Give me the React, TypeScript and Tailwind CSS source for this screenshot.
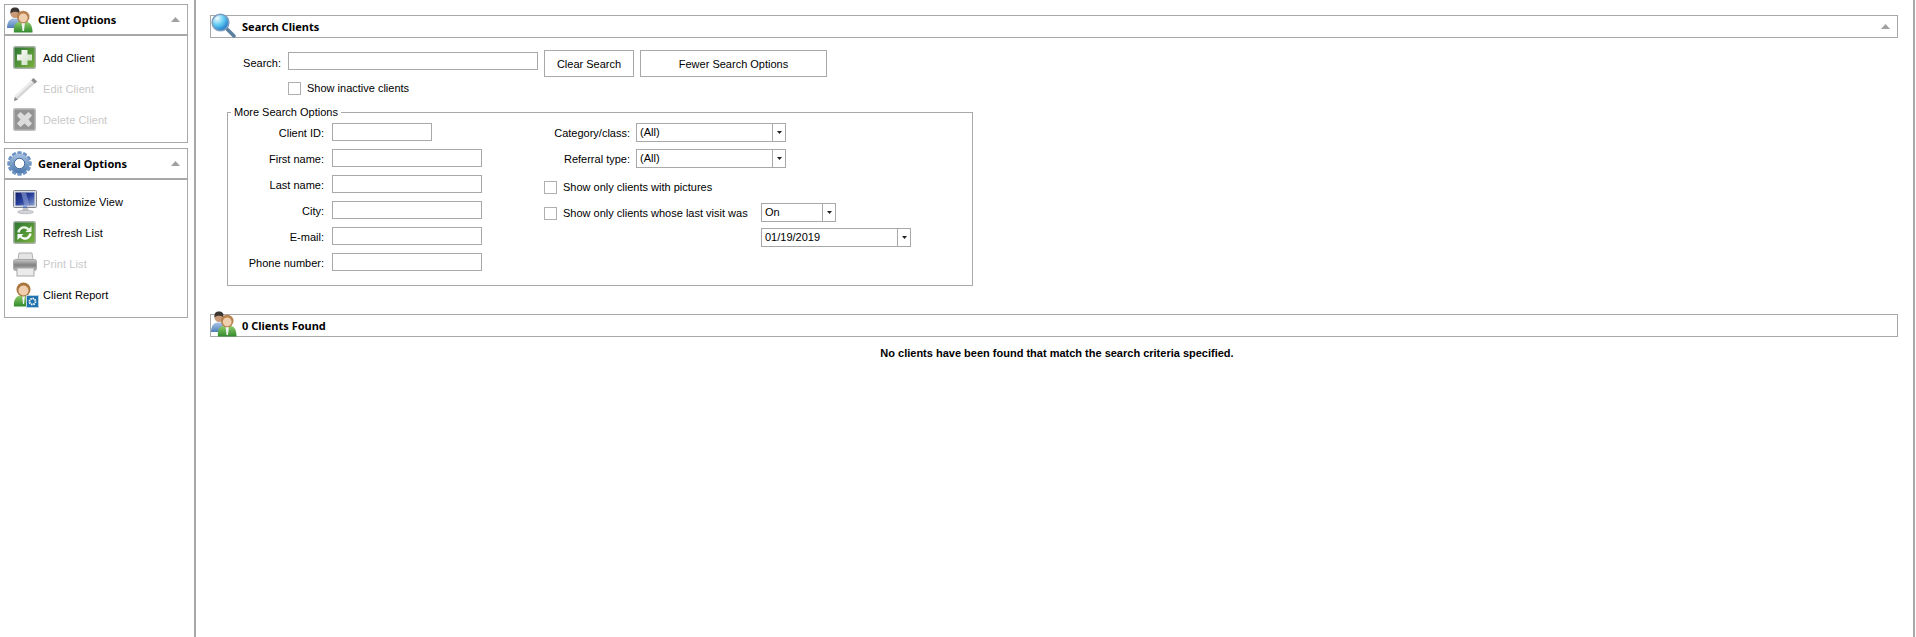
import React from "react";

const F = "font-['Liberation_Sans',Arial,sans-serif]";

function Tri() {
  return <svg width="9" height="5" viewBox="0 0 9 5" className="block"><path d="M4.5 0L9 5H0z" fill="#a0a0a0" /></svg>;
}

function Users({ id }: { id: string }) {
  return (
    <svg width="26" height="26" viewBox="0 0 26 26">
      <defs>
        <linearGradient id={`${id}b`} x1="0" y1="0" x2="0" y2="1"><stop offset="0" stopColor="#a9c4e6" /><stop offset="1" stopColor="#4f7fb8" /></linearGradient>
        <linearGradient id={`${id}g`} x1="0" y1="0" x2="0" y2="1"><stop offset="0" stopColor="#8fcb6a" /><stop offset="1" stopColor="#2f8a2c" /></linearGradient>
      </defs>
      <path d="M0 21c0-6 3-9.500 6-9.500h4c3 0 5 3 5 9.500z" fill={`url(#${id}b)`} />
      <circle cx="8" cy="6.500" r="4.500" fill="#c89a78" />
      <path d="M3.500 6.500C3 2 5 .5 8 .5s5 1.500 4.500 6c-2-2.500-7-2.500-9 0z" fill="#3a3430" />
      <path d="M7 25.500c-1-7 2-10.500 5-10.500h8c3 0 5.500 3.500 5.500 10.500z" fill={`url(#${id}g)`} />
      <path d="M14.500 15h3.500l-1 9h-1.500z" fill="#f2f2f2" />
      <circle cx="16.200" cy="10" r="6.300" fill="#b7824f" />
      <circle cx="16.200" cy="10.800" r="4.400" fill="#f0cfae" />
    </svg>
  );
}

function Add() {
  return (
    <svg width="24" height="24" viewBox="0 0 24 24">
      <defs><linearGradient id="ag" x1="0" y1="0" x2="1" y2="1"><stop offset="0" stopColor="#2a7433" /><stop offset="1" stopColor="#7ab33c" /></linearGradient>
      <linearGradient id="aw" x1="0" y1="0" x2="1" y2="1"><stop offset="0" stopColor="#ffffff" /><stop offset="1" stopColor="#c9dcc0" /></linearGradient></defs>
      <rect x=".75" y=".75" width="21.500" height="21.500" rx="1.500" fill="url(#ag)" stroke="#a9b0a9" strokeWidth="1.500" />
      <path d="M8.500 4h6v4.500H19v6h-4.500V19h-6v-4.500H4v-6h4.500z" fill="url(#aw)" />
    </svg>
  );
}

function Pencil() {
  return (
    <svg width="25" height="25" viewBox="0 0 25 25">
      <path d="M20.500 1l3.500 3.500L5 22l-4 2 1-5z" fill="#d6d6d6" />
      <path d="M20.500 1l3.500 3.500-2.200 2.200-3.500-3.500z" fill="#8e8e8e" />
      <path d="M18 3.500l1.500 1.500L3 20.500 2 19.500z" fill="#efefef" />
      <path d="M1 24l.9-4 3 2.800z" fill="#8a8a8a" />
    </svg>
  );
}

function Del() {
  return (
    <svg width="24" height="24" viewBox="0 0 24 24">
      <rect x=".75" y=".75" width="21.500" height="21.500" rx="1.500" fill="#949494" stroke="#bdbdbd" strokeWidth="1.500" />
      <path d="M7.500 4l4 3.500L15.500 4 19 7.500l-3.500 4 3.500 4-3.500 3.500-4-3.500-4 3.500L4 15.500l3.500-4L4 7.500z" fill="#dcdcdc" />
    </svg>
  );
}

function Gear() {
  return (
    <svg width="25" height="25" viewBox="0 0 25 25">
      <defs><linearGradient id="gg" x1="0" y1="0" x2="0" y2="1"><stop offset="0" stopColor="#a9c2e2" /><stop offset="1" stopColor="#4c78ad" /></linearGradient></defs>
      {[0, 30, 60, 90, 120, 150, 180, 210, 240, 270, 300, 330].map((a) => (
        <rect key={a} x="10.300" y=".3" width="4.400" height="5" rx=".8" transform={`rotate(${a} 12.500 12.500)`} fill="#6f95c4" />
      ))}
      <circle cx="12.500" cy="12.500" r="9.800" fill="url(#gg)" />
      <circle cx="12.500" cy="12.500" r="5.200" fill="#fff" stroke="#3f6798" />
    </svg>
  );
}

function Monitor() {
  return (
    <svg width="25" height="25" viewBox="0 0 25 25">
      <defs><linearGradient id="mg" x1="0" y1="0" x2="1" y2="1"><stop offset="0" stopColor="#14206a" /><stop offset=".5" stopColor="#27409c" /><stop offset="1" stopColor="#8fa2d0" /></linearGradient></defs>
      <rect x=".5" y=".5" width="23" height="17" rx="1" fill="#dcdee2" stroke="#80848c" />
      <rect x="2.500" y="2.500" width="19" height="13" fill="url(#mg)" />
      <path d="M8 2.500h5l3.500 13h-5z" fill="#8ea0d4" opacity=".6" />
      <path d="M10 18h5l1 3H9z" fill="#c4c6ca" />
      <rect x="10" y="16.500" width="4" height="1" fill="#2a63d6" />
      <ellipse cx="12.500" cy="22" rx="8" ry="1.800" fill="#d2d4d8" stroke="#9a9da3" strokeWidth=".5" />
    </svg>
  );
}

function Refresh() {
  return (
    <svg width="24" height="24" viewBox="0 0 24 24">
      <defs><linearGradient id="rg" x1="0" y1="0" x2="1" y2="1"><stop offset="0" stopColor="#2a7433" /><stop offset="1" stopColor="#7ab33c" /></linearGradient></defs>
      <rect x=".75" y=".75" width="21.500" height="21.500" rx="1.500" fill="url(#rg)" stroke="#a9b0a9" strokeWidth="1.500" />
      <path d="M5.500 11.500C6 8 9 6 12 6.500c1.500.2 2.500 1 3.500 2" fill="none" stroke="#eef6e8" strokeWidth="2.400" />
      <path d="M18.500 5v6h-6z" fill="#eef6e8" />
      <path d="M17.500 12.500c-.5 3.500-3.500 5.500-6.500 5-1.500-.2-2.500-1-3.500-2" fill="none" stroke="#fff" strokeWidth="2.400" />
      <path d="M4.500 19v-6h6z" fill="#fff" />
    </svg>
  );
}

function Printer() {
  return (
    <svg width="25" height="25" viewBox="0 0 25 25">
      <defs><linearGradient id="pg" x1="0" y1="0" x2="0" y2="1"><stop offset="0" stopColor="#c8c8c8" /><stop offset=".5" stopColor="#828282" /><stop offset="1" stopColor="#b8b8b8" /></linearGradient></defs>
      <path d="M6 1h13l1 7H5z" fill="#e4e4e4" stroke="#b0b0b0" />
      <rect x=".5" y="7.500" width="23" height="11" rx="2" fill="url(#pg)" stroke="#a8a8a8" />
      <rect x="4" y="16" width="17" height="8" fill="#ebebeb" stroke="#a8a8a8" />
    </svg>
  );
}

function Report() {
  return (
    <svg width="26" height="26" viewBox="0 0 26 26">
      <defs><linearGradient id="cg" x1="0" y1="0" x2="0" y2="1"><stop offset="0" stopColor="#8fcb6a" /><stop offset="1" stopColor="#2f8a2c" /></linearGradient></defs>
      <path d="M1 24.500c-1-7 3-11 6-11h7c3 0 4 4 4 11z" fill="url(#cg)" />
      <path d="M9 13h3l-1 9h-1z" fill="#f2f2f2" />
      <circle cx="10.500" cy="7.500" r="7" fill="#a8753f" />
      <circle cx="10.500" cy="8.500" r="5" fill="#f0cfae" />
      <rect x="13.500" y="13.500" width="12" height="12" fill="#1f72ad" stroke="#b6d3e6" />
      <circle cx="19.500" cy="19.500" r="3" fill="none" stroke="#fff" strokeWidth="1.800" strokeDasharray="1.500 .8" />
    </svg>
  );
}

function Magnifier() {
  return (
    <svg width="26" height="25" viewBox="0 0 26 25">
      <defs><radialGradient id="lg" cx=".3" cy=".25" r=".85"><stop offset="0" stopColor="#f2fdff" /><stop offset=".5" stopColor="#5cc8f0" /><stop offset="1" stopColor="#1668c0" /></radialGradient></defs>
      <path d="M15 15l8 8" stroke="#5b7fa0" strokeWidth="3.500" strokeLinecap="round" />
      <circle cx="9.500" cy="9.500" r="8.300" fill="url(#lg)" stroke="#7d9ec0" strokeWidth="1.600" />
    </svg>
  );
}

function SideItem({ icon, label, off }: { icon: React.ReactNode; label: string; off?: boolean }) {
  return (
    <div className="flex h-[26px] shrink-0 items-center pl-2">
      <div className="flex h-[26px] w-[30px] shrink-0 items-center">{icon}</div>
      <span className={off ? "tracking-[0.1px] text-[#c8c8c8]" : "tracking-[0.1px] text-black"}>{label}</span>
    </div>
  );
}

function SidePanel({ title, icon, children }: { title: string; icon: React.ReactNode; children: React.ReactNode }) {
  return (
    <section className="w-[184px] border border-[#a8a8a8]">
      <header className="flex h-[31px] items-center border-b-2 border-[#a8a8a8] pl-[2px] pr-[7px]">
        <div className="w-[31px] shrink-0">{icon}</div>
        <h2 className="flex-1 pt-[1px] font-['Noto_Sans',sans-serif] text-[11px] font-bold text-black">{title}</h2>
        <Tri />
      </header>
      {children}
    </section>
  );
}

function Field({ label, w }: { label: string; w: string }) {
  return (
    <div className="flex h-[18px] items-center">
      <label className="mr-[8px] w-[96px] pt-[2px] text-right">{label}</label>
      <div className={`h-[18px] border border-[#a8a8a8] ${w}`} />
    </div>
  );
}

function CheckRow({ label, className }: { label: string; className?: string }) {
  return (
    <div className={`flex items-center gap-[6px] leading-[13px] ${className ?? ""}`}>
      <span className="block size-[13px] shrink-0 border border-[#b0b0b0]" />
      <span>{label}</span>
    </div>
  );
}

function Select({ value, w }: { value: string; w: string }) {
  return (
    <div className={`flex h-[19px] items-stretch border border-[#a8a8a8] ${w}`}>
      <span className="flex-1 pl-[3px] leading-[16px]">{value}</span>
      <span className="flex w-[13px] items-center justify-center border-l border-[#a8a8a8]">
        <svg width="5" height="3" viewBox="0 0 5 3"><path d="M0 0h5L2.500 3z" fill="#222" /></svg>
      </span>
    </div>
  );
}

function SectionBar({ icon, title, chevron }: { icon: React.ReactNode; title: string; chevron?: boolean }) {
  return (
    <header className="relative flex h-[23px] w-[1688px] items-center border border-[#a8a8a8] pl-[31px] pr-[7px]">
      <span className="absolute bottom-[-1px] left-0">{icon}</span>
      <h2 className="flex-1 pt-[1px] font-['Noto_Sans',sans-serif] text-[11px] font-bold text-black">{title}</h2>
      {chevron && <Tri />}
    </header>
  );
}

export default function App() {
  return (
    <div className={`${F} flex h-[637px] w-[1916px] overflow-hidden bg-white text-[11px] text-black`}>
      <aside className="flex h-full w-[196px] shrink-0 flex-col gap-[5px] border-r-2 border-[#a8a8a8] pl-[4px] pt-[4px]">
        <SidePanel title="Client Options" icon={<Users id="u1" />}>
          <div className="flex h-[106px] flex-col gap-[5px] pt-[9px]">
            <SideItem icon={<Add />} label="Add Client" />
            <SideItem icon={<Pencil />} label="Edit Client" off />
            <SideItem icon={<Del />} label="Delete Client" off />
          </div>
        </SidePanel>
        <SidePanel title="General Options" icon={<Gear />}>
          <div className="flex h-[137px] flex-col justify-center gap-[5px]">
            <SideItem icon={<Monitor />} label="Customize View" />
            <SideItem icon={<Refresh />} label="Refresh List" />
            <SideItem icon={<Printer />} label="Print List" off />
            <SideItem icon={<Report />} label="Client Report" />
          </div>
        </SidePanel>
      </aside>

      <main className="flex-1 pl-[14px] pt-[15px]">
        <SectionBar icon={<Magnifier />} title="Search Clients" chevron />

        <div className="mt-[12px] flex items-start">
          <label className="mt-[4px] w-[71px] text-right leading-[18px]">Search:</label>
          <div className="ml-[7px] mt-[2px] h-[18px] w-[250px] border border-[#a8a8a8]" />
          <button className="ml-[6px] h-[27px] w-[90px] border border-[#a8a8a8] pt-[1px]">Clear Search</button>
          <button className="ml-[6px] h-[27px] w-[187px] border border-[#a8a8a8] pt-[1px]">Fewer Search Options</button>
        </div>

        <CheckRow label="Show inactive clients" className="ml-[78px] mt-[5px]" />

        <fieldset className="relative ml-[17px] mt-[17px] flex h-[174px] w-[746px] border border-[#a8a8a8] pt-[10px]">
          <legend className="absolute left-[3px] top-[-7px] bg-white px-[3px] leading-[13px]">More Search Options</legend>
          <div className="flex flex-col gap-[8px]">
            <Field label="Client ID:" w="w-[100px]" />
            <Field label="First name:" w="w-[150px]" />
            <Field label="Last name:" w="w-[150px]" />
            <Field label="City:" w="w-[150px]" />
            <Field label="E-mail:" w="w-[150px]" />
            <Field label="Phone number:" w="w-[150px]" />
          </div>
          <div className="ml-[62px] flex flex-col">
            <div className="flex items-center">
              <label className="mr-[6px] w-[86px] pt-[2px] text-right">Category/class:</label>
              <Select value="(All)" w="w-[150px]" />
            </div>
            <div className="mt-[7px] flex items-center">
              <label className="mr-[6px] w-[86px] pt-[2px] text-right">Referral type:</label>
              <Select value="(All)" w="w-[150px]" />
            </div>
            <CheckRow label="Show only clients with pictures" className="mt-[13px]" />
            <div className="mt-[9px] flex items-start">
              <CheckRow label="Show only clients whose last visit was" className="mt-[4px] w-[217px]" />
              <div className="flex flex-col gap-[6px]">
                <Select value="On" w="w-[75px]" />
                <Select value="01/19/2019" w="w-[150px]" />
              </div>
            </div>
          </div>
        </fieldset>

        <div className="mt-[28px]">
          <SectionBar icon={<Users id="u2" />} title="0 Clients Found" />
        </div>
        <p className="mt-[8px] w-[1688px] pl-[6px] text-center font-bold">No clients have been found that match the search criteria specified.</p>
      </main>

      <div className="mr-[1px] w-[2px] shrink-0 bg-[#a8a8a8]" />
    </div>
  );
}
